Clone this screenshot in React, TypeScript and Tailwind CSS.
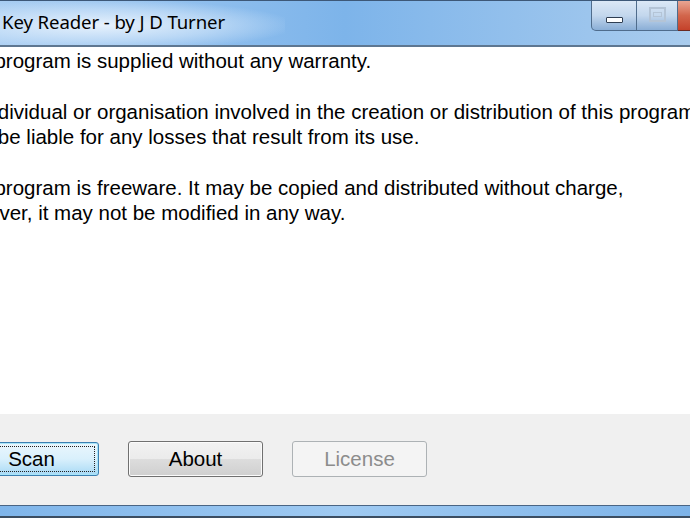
const sans = "font-['Liberation_Sans',Arial,sans-serif]";

const Lines = [
  { t: "This program is supplied without any warranty.", shift: "" },
  { t: "", shift: "" },
  { t: "No individual or organisation involved in the creation or distribution of this program will not", shift: "" },
  { t: "shall be liable for any losses that result from its use.", shift: "" },
  { t: "", shift: "" },
  { t: "This program is freeware. It may be copied and distributed without charge,", shift: "" },
  { t: "However, it may not be modified in any way.", shift: "-ml-[3px]" },
];

const CaptionButtons = () => (
  <div className="flex h-[30px] shrink-0">
    <div className="w-[46px] h-full border border-t-0 border-[#4f6c8c] rounded-bl-[5px] bg-gradient-to-b from-[#dbe8f6] via-[#c3d7ed] to-[#8aaed6] flex items-center justify-center">
      <div className="mt-[9px] w-[17px] h-[6px] bg-white border border-[#2f3e52] rounded-[1px]" />
    </div>
    <div className="w-[41px] h-full border-b border-r border-[#4f6c8c] bg-gradient-to-b from-[#dbe8f6] via-[#c3d7ed] to-[#8aaed6] flex items-center justify-center">
      <div className="mb-[2px] w-[17px] h-[15px] border-2 border-[#b4c4d6] flex items-center justify-center">
        <div className="w-[9px] h-[5px] border border-[#b4c4d6]" />
      </div>
    </div>
    <div className="w-[12px] h-full border-b border-[#6b2a22] bg-gradient-to-b from-[#e8a593] via-[#d2664c] to-[#c4412a]" />
  </div>
);

export default function App() {
  return (
    <div className="w-[690px] h-[518px] overflow-hidden flex flex-col bg-white">
      <div className="h-[45px] shrink-0 flex justify-between items-start bg-gradient-to-r from-[#a8cdf2] via-[#7db4ea] to-[#a9ccee] border-t border-[#3d5878]">
        <div className="h-full flex items-center pl-[2px] pb-[2px] bg-[radial-gradient(ellipse_at_35%_55%,rgba(235,244,253,0.95)_0%,rgba(210,230,250,0.6)_45%,rgba(160,200,240,0)_75%)] pr-[60px]">
          <span className="font-['Noto_Sans',sans-serif] text-[18.6px] tracking-[-0.1px] text-black whitespace-nowrap">
            Key Reader - by J D Turner
          </span>
        </div>
        <CaptionButtons />
      </div>
      <div className="h-[2px] shrink-0 bg-[#5e7791]" />

      <div className={`flex-1 pt-[1px] ${sans} text-[20.5px] leading-[25.4px] text-black`}>
        <div className="-ml-[50px] whitespace-nowrap">
          {Lines.map((l, i) => (
            <div key={i} className={`h-[25.4px] ${l.shift}`}>{l.t}</div>
          ))}
        </div>
      </div>

      <div className="h-[91px] shrink-0 bg-[#f0f0f0] flex items-center pb-[1px]">
        <div className={`-ml-[36px] flex items-center gap-[29px] ${sans} text-[20.5px]`}>
          <button className="relative w-[135px] h-[34px] rounded-[3px] border border-[#3c7fb1] bg-gradient-to-b from-[#eaf6fd] via-[#d9f0fc] to-[#a7d9f5] text-black shadow-[inset_0_0_0_1px_#a8e5f9]">
            <span className="absolute inset-[3px] border border-dotted border-[#202020] rounded-[1px]" />
            Scan
          </button>
          <button className="w-[135px] h-[36px] rounded-[3px] border border-[#707070] bg-[linear-gradient(to_bottom,#f2f2f2_0%,#ebebeb_50%,#dddddd_50%,#cfcfcf_100%)] text-black shadow-[inset_0_0_0_1px_#fbfbfb]">
            About
          </button>
          <button className="w-[135px] h-[36px] rounded-[3px] border border-[#adb2b5] bg-[#f4f4f4] text-[#8c8c8c]">
            License
          </button>
        </div>
      </div>

      <div className="h-[13px] shrink-0 border-t border-[#4a6584] border-b-2 border-b-[#3b4d61] bg-gradient-to-r from-[#7fb5ea] via-[#9fcaf2] to-[#7db3e8]" />
    </div>
  );
}
